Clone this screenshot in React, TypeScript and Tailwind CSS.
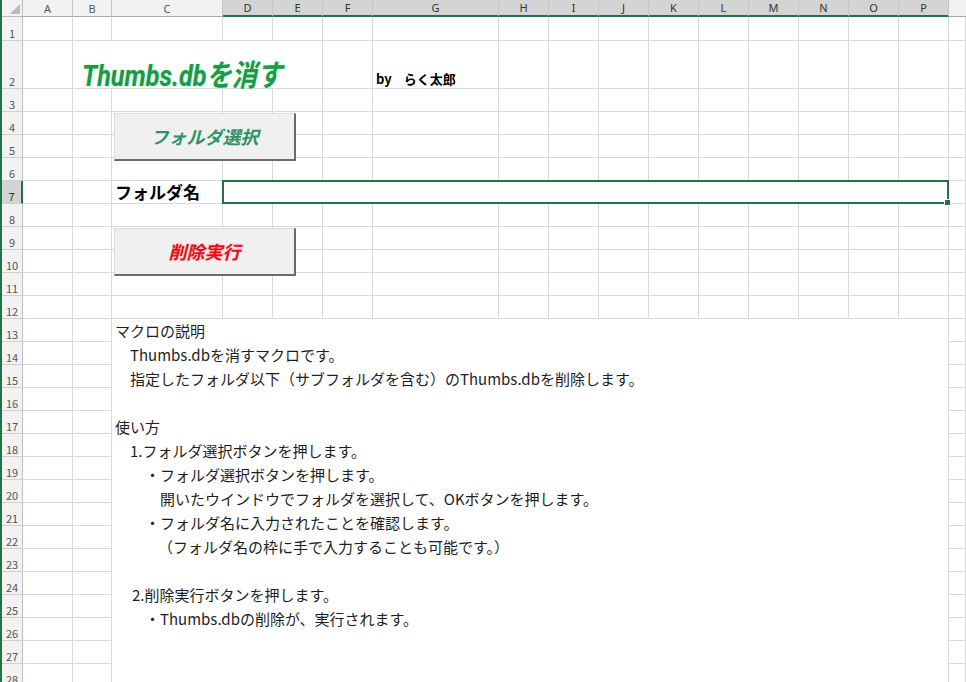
import type { ReactNode } from "react";

const COLS = ["A", "B", "C", "D", "E", "F", "G", "H", "I", "J", "K", "L", "M", "N", "O", "P"];
const SELECTED_COLS = ["D", "E", "F", "G", "H", "I", "J", "K", "L", "M", "N", "O", "P"];

const cellLine = "border-r border-b border-[#dadada]";

// description block inside the merged C13:P28 area
const notes: { text: string; indent: string }[] = [
  { text: "マクロの説明", indent: "pl-0" },
  { text: "Thumbs.dbを消すマクロです。", indent: "pl-[15px]" },
  { text: "指定したフォルダ以下（サブフォルダを含む）のThumbs.dbを削除します。", indent: "pl-[15px]" },
  { text: "", indent: "pl-0" },
  { text: "使い方", indent: "pl-0" },
  { text: "1.フォルダ選択ボタンを押します。", indent: "pl-[15px]" },
  { text: "・フォルダ選択ボタンを押します。", indent: "pl-[30px]" },
  { text: "開いたウインドウでフォルダを選択して、OKボタンを押します。", indent: "pl-[45px]" },
  { text: "・フォルダ名に入力されたことを確認します。", indent: "pl-[30px]" },
  { text: "（フォルダ名の枠に手で入力することも可能です。）", indent: "pl-[43px]" },
  { text: "", indent: "pl-0" },
  { text: "2.削除実行ボタンを押します。", indent: "pl-[17px]" },
  { text: "・Thumbs.dbの削除が、実行されます。", indent: "pl-[30px]" },
];

function RowHead({ n }: { n: number }) {
  const active = n === 7;
  return (
    <div
      className={
        "flex items-end justify-center pb-[1px] text-[11px] leading-none border-b border-[#cfcfcf] " +
        (active
          ? "bg-[#d4d4d4] text-[#333] border-r-2 border-r-[#217346]"
          : "bg-[#f2f2f2] text-[#555] border-r border-r-[#bdbdbd]")
      }
    >
      {n}
    </div>
  );
}

function Cell({ className = "", children }: { className?: string; children?: ReactNode }) {
  return <div className={cellLine + " " + className}>{children}</div>;
}

function SheetButton({ top, label, tone }: { top: string; label: string; tone: "green" | "red" }) {
  return (
    <button
      className={
        "absolute left-[112px] w-[182px] h-[48px] bg-[#f0f0f0] border-t border-l border-[#dcdcdc] border-r-2 border-b-2 border-r-[#6a6a6a] border-b-[#6a6a6a] flex items-center justify-center font-bold italic text-[18px] " +
        top +
        (tone === "green"
          ? " text-[#2f9462]"
          : " text-[#e3101a] [text-shadow:0_0_2px_#ffb3b3]")
      }
    >
      {label}
    </button>
  );
}

export default function App() {
  const rows: ReactNode[] = [];

  for (let r = 1; r <= 28; r++) {
    rows.push(<RowHead key={"h" + r} n={r} />);

    if (r === 2) {
      rows.push(<Cell key="A2" />);
      rows.push(
        <Cell key="B2" className="col-span-4 flex items-end pl-[9px]">
          <span className="relative top-[3px] inline-block origin-bottom-left scale-x-[0.84] whitespace-nowrap font-['Roboto','Noto_Sans_CJK_JP',sans-serif] font-bold italic text-[30px] leading-none text-[#1a9a48] [text-shadow:0_0_3px_#b6efc4]">
            Thumbs.dbを消す
          </span>
        </Cell>
      );
      rows.push(<Cell key="F2" />);
      rows.push(
        <Cell key="G2" className="flex items-end pl-[3px] pb-[1px]">
          <span className="whitespace-nowrap font-bold text-[13px] leading-[16px] text-black">
            by<span className="ml-[12px]">らく太郎</span>
          </span>
        </Cell>
      );
      ["H", "I", "J", "K", "L", "M", "N", "O", "P", "Q"].forEach((c) => rows.push(<Cell key={c + r} />));
      continue;
    }

    if (r === 7) {
      rows.push(<Cell key="A7" />);
      rows.push(<Cell key="B7" />);
      rows.push(
        <Cell key="C7" className="flex items-end pl-[3px]">
          <span className="whitespace-nowrap font-bold text-[17px] leading-[22px] text-black">フォルダ名</span>
        </Cell>
      );
      rows.push(
        <Cell key="D7" className="col-span-13 relative">
          <div className="absolute -inset-px border-2 border-[#217346]">
            <div className="absolute -right-[4px] -bottom-[4px] w-[7px] h-[7px] bg-[#217346] border border-white" />
          </div>
        </Cell>
      );
      rows.push(<Cell key="Q7" />);
      continue;
    }

    if (r === 13) {
      rows.push(<Cell key="A13" />);
      rows.push(<Cell key="B13" />);
      rows.push(
        <div key="C13" className="col-span-14 row-span-16 border-r border-[#dadada] bg-white pl-[3px] flex flex-col overflow-hidden">
          {notes.map((n, i) => (
            <div key={i} className={"h-[24px] shrink-0 flex items-center whitespace-nowrap text-[15px] text-[#1e1e1e] " + n.indent}>
              {n.text}
            </div>
          ))}
        </div>
      );
      rows.push(<Cell key="Q13" />);
      continue;
    }

    if (r > 13) {
      rows.push(<Cell key={"A" + r} />);
      rows.push(<Cell key={"B" + r} />);
      rows.push(<Cell key={"Q" + r} />);
      continue;
    }

    [...COLS, "Q"].forEach((c) => rows.push(<Cell key={c + r} />));
  }

  return (
    <div className="w-[966px] h-[682px] overflow-hidden bg-white font-['Noto_Sans_CJK_JP','Noto_Sans',sans-serif]">
      <div className="relative border-l-2 border-[#217346]">
        <div className="grid grid-cols-[21px_50px_39px_111px_50px_50px_50px_126px_repeat(9,50px)_1fr] grid-rows-[17px_24px_48px_repeat(26,23px)]">
          {/* corner */}
          <div className="bg-[#f2f2f2] border-r border-b border-[#bdbdbd] flex items-end justify-end p-[2px]">
            <svg width="10" height="10" viewBox="0 0 10 10">
              <polygon points="10,0 10,10 0,10" fill="#b9b9b9" />
            </svg>
          </div>
          {/* column headers */}
          {COLS.map((c) => {
            const sel = SELECTED_COLS.includes(c);
            return (
              <div
                key={"col" + c}
                className={
                  "flex items-center justify-center text-[11px] leading-none font-['Noto_Sans',sans-serif] border-r border-r-[#c6c6c6] " +
                  (sel
                    ? "bg-[#d4d4d4] text-[#333] border-b-2 border-b-[#217346]"
                    : "bg-[#f2f2f2] text-[#555] border-b border-b-[#ababab]")
                }
              >
                {c}
              </div>
            );
          })}
          <div className="bg-[#f2f2f2] border-b border-[#ababab]" />
          {rows}
        </div>

        <SheetButton top="top-[113px]" label="フォルダ選択" tone="green" />
        <SheetButton top="top-[228px]" label="削除実行" tone="red" />
      </div>
    </div>
  );
}
